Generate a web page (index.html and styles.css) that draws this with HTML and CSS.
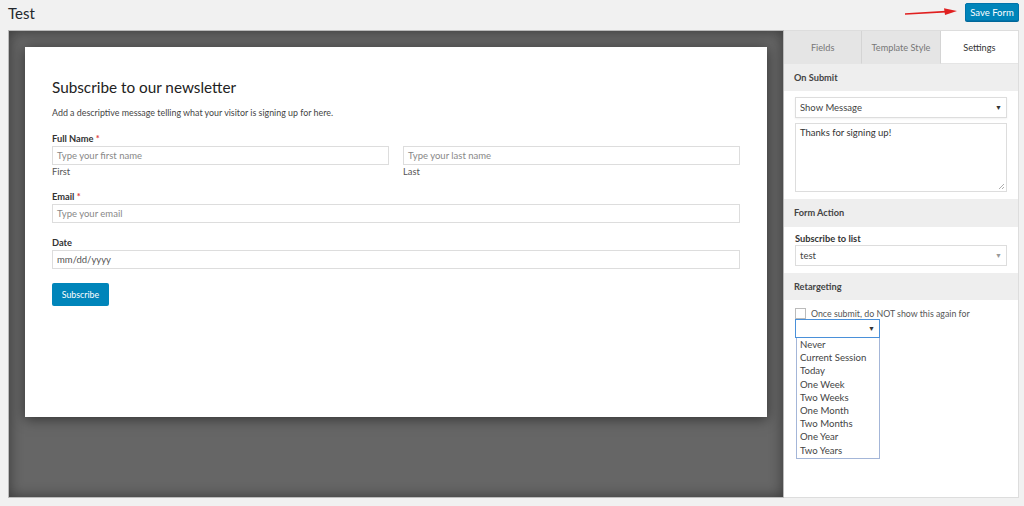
FILE: index.html
```html
<!DOCTYPE html>
<html lang="en">
<head>
    <meta charset="UTF-8">
    <meta name="viewport" content="width=device-width, initial-scale=1.0">
    <title>Test</title>
    <link rel="stylesheet" href="styles.css">
</head>
<body>
    <div class="topbar">
        <h1>Test</h1>
        <div class="save-wrap">
            <svg class="arrow" width="54" height="10" viewBox="0 0 54 10">
                <path d="M1 7 L42 4.6" stroke="#e02020" stroke-width="1.6" fill="none"/>
                <path d="M40 1.2 L53 4 L41 8 Z" fill="#e02020"/>
            </svg>
            <button class="save-btn">Save Form</button>
        </div>
    </div>
    <div class="workspace">
        <div class="preview">
            <div class="card">
                <h2>Subscribe to our newsletter</h2>
                <p class="desc">Add a descriptive message telling what your visitor is signing up for here.</p>
                <div class="field first">
                    <label>Full Name <span class="req">*</span></label>
                    <div class="name-row">
                        <div class="name-col">
                            <div class="input">Type your first name</div>
                            <span class="sub">First</span>
                        </div>
                        <div class="name-col">
                            <div class="input">Type your last name</div>
                            <span class="sub">Last</span>
                        </div>
                    </div>
                </div>
                <div class="field">
                    <label>Email <span class="req">*</span></label>
                    <div class="input">Type your email</div>
                </div>
                <div class="field">
                    <label>Date</label>
                    <div class="input date">mm/dd/yyyy</div>
                </div>
                <button class="subscribe">Subscribe</button>
            </div>
        </div>
        <div class="sidebar">
            <div class="tabs">
                <div class="tab">Fields</div>
                <div class="tab">Template Style</div>
                <div class="tab active">Settings</div>
            </div>
            <div class="section-head">On Submit</div>
            <div class="section-body">
                <div class="select">Show Message <span class="caret">&#9660;</span></div>
                <div class="textarea">Thanks for signing up!
                    <svg class="grip" width="7" height="7" viewBox="0 0 7 7"><path d="M6 1 L1 6 M6 4 L4 6" stroke="#999" stroke-width="0.8"/></svg>
                </div>
            </div>
            <div class="section-head tall">Form Action</div>
            <div class="section-body">
                <div class="small-label">Subscribe to list</div>
                <div class="select light">test <span class="caret grey">&#9660;</span></div>
            </div>
            <div class="section-head">Retargeting</div>
            <div class="section-body retarget">
                <div class="check-row"><span class="checkbox"></span>Once submit, do NOT show this again for</div>
                <div class="dropdown">
                    <div class="dd-box"><span class="caret">&#9660;</span></div>
                    <ul class="dd-list">
                        <li>Never</li>
                        <li>Current Session</li>
                        <li>Today</li>
                        <li>One Week</li>
                        <li>Two Weeks</li>
                        <li>One Month</li>
                        <li>Two Months</li>
                        <li>One Year</li>
                        <li>Two Years</li>
                    </ul>
                </div>
            </div>
        </div>
    </div>
</body>
</html>
```

FILE: styles.css
```css
body {
    font-family: Lato, "Open Sans", sans-serif;
    color: #23282d;
    background-color: #f1f1f1;
    margin: 0;
    padding: 0 5px 0 8px;
    font-size: 11px;
}
.topbar {
    display: flex;
    justify-content: space-between;
    align-items: center;
    height: 30px;
}
.topbar h1 {
    font-size: 15px;
    font-weight: 400;
    margin: 0;
    position: relative;
    top: -2px;
}
.save-wrap {
    display: flex;
    align-items: center;
    gap: 7px;
    position: relative;
    top: -3px;
}
.save-btn {
    background-color: #0085ba;
    border: 1px solid #0073aa;
    border-radius: 2px;
    color: #fff;
    font-family: inherit;
    font-size: 9.5px;
    height: 18px;
    width: 54px;
    padding: 0;
    box-shadow: 0 1px 0 #006799;
}
.workspace {
    display: flex;
    height: 468px;
}
.preview {
    width: 776px;
    background-color: #666;
    border: 1px solid #bbb;
    box-shadow: inset 0 0 14px rgba(0, 0, 0, 0.45);
    padding: 16px 16px 0 16px;
    box-sizing: border-box;
}
.card {
    background-color: #fff;
    height: 370px;
    box-shadow: 0 2px 12px rgba(0, 0, 0, 0.5);
    padding: 29px 27px 0 27px;
    box-sizing: border-box;
}
.card h2 {
    font-size: 15.3px;
    line-height: 22px;
    font-weight: 400;
    margin: 0 0 9px 0;
    color: #222;
}
.desc {
    font-size: 8.9px;
    line-height: 12px;
    color: #444;
    margin: 0 0 14px 0;
}
.field {
    margin-bottom: 14px;
}
.field.first {
    margin-bottom: 13px;
}
.field label {
    display: block;
    font-size: 9.3px;
    line-height: 12px;
    font-weight: 700;
    color: #333;
    margin-bottom: 1px;
}
.req {
    color: #e04040;
}
.name-row {
    display: flex;
    gap: 14px;
}
.name-col {
    flex: 1;
}
.input {
    border: 1px solid #ddd;
    height: 19px;
    box-sizing: border-box;
    line-height: 17px;
    padding: 0 4px;
    font-size: 9.5px;
    color: #888;
}
.input.date {
    color: #555;
}
.sub {
    display: block;
    font-size: 9.3px;
    line-height: 12px;
    color: #555;
    margin-top: 1px;
}
.subscribe {
    margin-top: 0;
    background-color: #0085ba;
    color: #fff;
    border: none;
    border-radius: 2px;
    font-family: inherit;
    font-size: 8.8px;
    width: 57px;
    height: 23px;
}
.sidebar {
    flex: 1;
    background-color: #fff;
    border: 1px solid #ddd;
    border-left: none;
}
.tabs {
    display: flex;
    height: 33px;
}
.tab {
    flex: 1;
    display: flex;
    align-items: center;
    justify-content: center;
    background-color: #e5e5e5;
    border-right: 1px solid #d4d4d4;
    border-bottom: 1px solid #e5e5e5;
    font-size: 9.2px;
    color: #777;
}
.tab.active {
    background-color: #fff;
    color: #333;
    border-right: none;
}
.section-head {
    background-color: #eee;
    height: 27px;
    line-height: 27px;
    padding: 0 10px;
    font-size: 9.2px;
    font-weight: 700;
    color: #444;
}
.section-head.tall {
    height: 28px;
    line-height: 28px;
}
.section-body {
    padding: 6px 11px 7px 11px;
}
.select {
    border: 1px solid #ddd;
    height: 19px;
    line-height: 19px;
    padding: 0 4px;
    font-size: 9.5px;
    color: #444;
    position: relative;
    box-shadow: 0 1px 2px rgba(0, 0, 0, 0.06);
}
.select.light {
    box-shadow: none;
}
.caret {
    position: absolute;
    right: 4px;
    top: 0;
    font-size: 7px;
    color: #333;
}
.caret.grey {
    color: #999;
}
.textarea {
    margin-top: 5px;
    border: 1px solid #ddd;
    padding: 3px 4px;
    box-sizing: border-box;
    height: 69px;
    font-size: 9.5px;
    color: #333;
    position: relative;
}
.grip {
    position: absolute;
    right: 1px;
    bottom: 1px;
}
.small-label {
    font-size: 9.3px;
    font-weight: 700;
    color: #333;
    line-height: 12px;
    margin: 0;
}
.retarget {
    padding-top: 7px;
}
.check-row {
    display: flex;
    align-items: center;
    font-size: 8.8px;
    color: #555;
    height: 12px;
}
.checkbox {
    width: 9px;
    height: 9px;
    border: 1px solid #bbb;
    margin-right: 5px;
    background-color: #fff;
}
.dropdown {
    width: 85px;
}
.dd-box {
    border: 1px solid #4a90d9;
    height: 17px;
    position: relative;
    line-height: 17px;
}
.dd-list {
    list-style: none;
    margin: 0 0 0 1px;
    padding: 0 0 1px 3px;
    border: 1px solid #a4b6d8;
    border-top: none;
    background-color: #fff;
}
.dd-list li {
    font-size: 9.6px;
    color: #444;
    height: 13.2px;
    line-height: 13.2px;
}
```
